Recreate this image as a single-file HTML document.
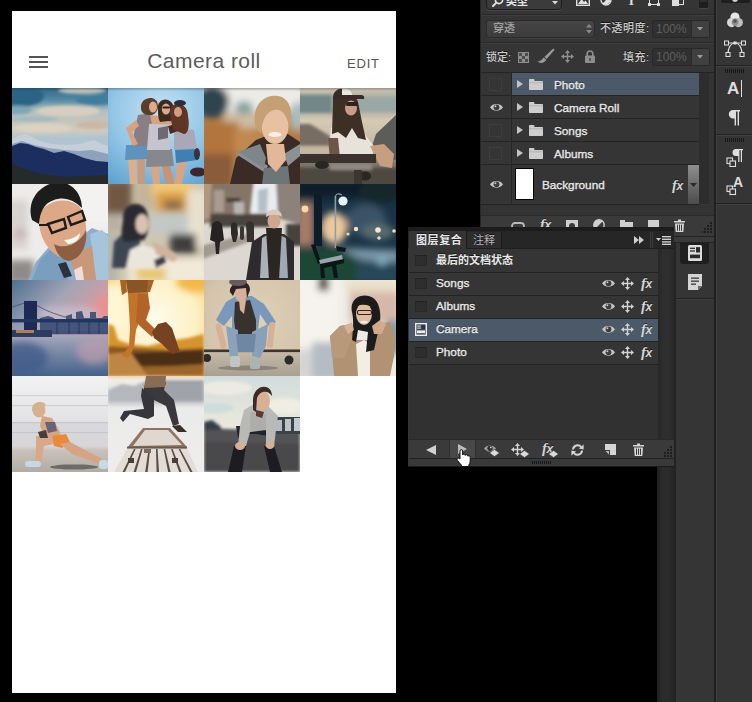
<!DOCTYPE html>
<html><head><meta charset="utf-8">
<style>
html,body{margin:0;padding:0;background:#000;}
body{width:752px;height:702px;position:relative;overflow:hidden;font-family:"Liberation Sans","Noto Sans CJK SC",sans-serif;}
.abs{position:absolute;}
#phone{position:absolute;left:12px;top:11px;width:384px;height:682px;background:#fff;}
#title{position:absolute;left:0;width:384px;top:38px;text-align:center;font-size:21px;color:#5c5c5c;letter-spacing:0.45px;}
#edit{position:absolute;left:335px;top:45px;font-size:13px;color:#555;letter-spacing:0.8px;}
.hb{position:absolute;left:17px;width:19px;height:2px;background:#555;}
.ph{position:absolute;width:96px;height:96px;overflow:hidden;}
.ph svg{display:block;}
/* PS panels */
.t{position:absolute;color:#e8e8e8;font-size:11.75px;font-weight:normal;-webkit-text-stroke:0.35px #e8e8e8;white-space:nowrap;text-shadow:0 -1px 0 rgba(0,0,0,.6);line-height:14px;}
.cj{font-family:"Liberation Sans","Noto Sans CJK SC",sans-serif;font-size:11px;-webkit-text-stroke:0;}
.fx{color:#d4d4d4;font:italic bold 12px "Liberation Sans",sans-serif;line-height:16px;white-space:nowrap;text-shadow:0 -1px 0 rgba(0,0,0,.5)}
.fx b{font:italic bold 15px "Liberation Serif",serif;margin-right:-0.5px}
.grip{background:repeating-linear-gradient(90deg,#161616 0,#161616 1px,transparent 1px,transparent 2px)}
.cb{position:absolute;width:10px;height:9px;border:1px solid #282828;border-top-color:#222;background:#2e2e2e}
.row{position:absolute;left:481px;width:218px;height:22px;background:#353535;border-bottom:1px solid #232323;}
.crow{position:absolute;left:409px;width:249px;height:22px;background:#353535;border-bottom:1px solid #232323;}
</style></head><body>

<!-- PHONE -->
<div id="phone">
  <div class="hb" style="top:45px"></div><div class="hb" style="top:50px"></div><div class="hb" style="top:55px"></div>
  <div id="title">Camera roll</div>
  <div id="edit">EDIT</div>
  
  <svg width="0" height="0" style="position:absolute"><defs>
<filter id="b1" filterUnits="userSpaceOnUse" x="0" y="0" width="96" height="96"><feGaussianBlur stdDeviation="0.7" edgeMode="duplicate"/></filter>
<filter id="b2" filterUnits="userSpaceOnUse" x="0" y="0" width="96" height="96"><feGaussianBlur stdDeviation="1.8" edgeMode="duplicate"/></filter>
<filter id="b4" filterUnits="userSpaceOnUse" x="0" y="0" width="96" height="96"><feGaussianBlur stdDeviation="3.5" edgeMode="duplicate"/></filter>
<filter id="b7" filterUnits="userSpaceOnUse" x="0" y="0" width="96" height="96"><feGaussianBlur stdDeviation="7" edgeMode="duplicate"/></filter>
</defs></svg>

<!-- 1 mountains -->
<div class="ph" style="left:0;top:77px"><svg width="96" height="96" viewBox="0 0 96 96">
<defs><linearGradient id="p1s" x1="0" y1="0" x2="0" y2="1"><stop offset="0" stop-color="#2f6688"/><stop offset=".12" stop-color="#5288a4"/><stop offset=".24" stop-color="#b4c0be"/><stop offset=".44" stop-color="#d2cabc"/><stop offset=".52" stop-color="#b0c4d0"/><stop offset="1" stop-color="#b4c2c8"/></linearGradient></defs>
<rect width="96" height="96" fill="url(#p1s)"/>
<g filter="url(#b2)">
<ellipse cx="6" cy="8" rx="26" ry="11" fill="#2c6384"/>
<ellipse cx="70" cy="2.5" rx="24" ry="3.5" fill="#b9c0bc"/>
<ellipse cx="84" cy="12" rx="20" ry="5" fill="#3f7d9c"/>
<ellipse cx="6" cy="22" rx="14" ry="4.5" fill="#7fa6b6"/>
<ellipse cx="22" cy="31" rx="24" ry="2.4" fill="#a0b8c0"/>
<ellipse cx="56" cy="23" rx="32" ry="5.5" fill="#d6cfc1"/>
<ellipse cx="82" cy="37" rx="18" ry="4" fill="#cbb7a4"/>
<ellipse cx="30" cy="40" rx="30" ry="4.5" fill="#dcd2c2"/>
</g>
<g filter="url(#b1)">
<polygon points="0,51 6,48 14,46 20,49 28,53 40,56 55,57 68,56 78,53 82,52 90,56 96,58 96,78 0,78" fill="#c4cfda"/>
<polygon points="0,56 10,53 22,57 36,60 52,62 66,63 80,62 96,66 96,80 0,80" fill="#8fa2bc"/>
<polygon points="0,58 8,55 16,56 24,59 32,61 42,65 52,63 62,66 72,70 84,73 96,74 96,96 0,96" fill="#1b2e5e"/>
<polygon points="0,76 12,81 30,86 55,89 96,87 96,96 0,96" fill="#27292c"/>
</g>
</svg></div>

<!-- 2 three girls -->
<div class="ph" style="left:96px;top:77px"><svg width="96" height="96" viewBox="0 0 96 96">
<defs><radialGradient id="p2s" cx=".55" cy=".25" r=".9"><stop offset="0" stop-color="#c4e2f4"/><stop offset=".55" stop-color="#94c6e6"/><stop offset="1" stop-color="#5ea2d0"/></radialGradient></defs>
<rect width="96" height="96" fill="url(#p2s)"/>
<g filter="url(#b1)">
<!-- legs -->
<polygon points="20,70 28,70 30,96 22,96" fill="#dcae90"/><polygon points="29,70 37,70 37,96 31,96" fill="#c99a7c"/>
<polygon points="42,76 51,76 52,96 45,96" fill="#d8a585"/><polygon points="53,76 62,76 66,96 58,96" fill="#c99474"/>
<polygon points="70,72 79,72 74,96 66,96" fill="#d7a484"/>
<!-- shorts -->
<polygon points="18,57 40,57 39,71 17,72" fill="#5f92bd"/>
<polygon points="39,61 64,61 66,78 38,79" fill="#85888d"/>
<polygon points="67,61 88,60 90,72 68,75" fill="#3f7fb4"/>
<!-- tops -->
<polygon points="30,27 44,25 46,58 24,58 27,40" fill="#8a7e86"/>
<polygon points="41,36 60,34 62,62 39,62" fill="#c6c4cc"/>
<polygon points="50,40 60,38 60,50 50,52" fill="#6e6a72"/>
<polygon points="66,40 86,42 89,61 66,62" fill="#aaa8b8"/>
<!-- arms -->
<polygon points="18,40 28,32 31,38 24,44 30,56 25,58" fill="#d6a282"/>
<polygon points="42,27 74,31 74,37 44,36" fill="#d6a282"/>
<polygon points="60,38 76,34 78,40 62,46" fill="#4a2c24"/>
<!-- heads -->
<path d="M33,20 C32,8 50,6 50,18 C50,24 46,28 40,27 C36,27 33,24 33,20 Z" fill="#5b3e2c"/><ellipse cx="45" cy="19" rx="4" ry="5.5" fill="#dbab8c"/>
<path d="M50,22 C48,8 66,8 66,22 C67,30 64,34 60,33 L52,34 C50,30 50,26 50,22 Z" fill="#3b2a22"/><ellipse cx="58" cy="21" rx="4.2" ry="5.5" fill="#d9a98a"/><rect x="54.5" y="18.5" width="7.5" height="2" rx="1" fill="#2a2020"/>
<path d="M62,26 C60,12 80,12 80,28 C82,38 80,46 76,46 L66,42 C63,36 63,30 62,26 Z" fill="#5e3426"/><ellipse cx="70" cy="24" rx="4" ry="5" fill="#d39c80"/>
<ellipse cx="72" cy="15" rx="6" ry="3" fill="#2b2f3a"/>
<!-- skates -->
<ellipse cx="90" cy="84" rx="8" ry="4.5" fill="#3a2630"/><ellipse cx="89" cy="66" rx="3" ry="6" fill="#3a3038"/>
</g>
</svg></div>

<!-- 3 blonde smiling -->
<div class="ph" style="left:192px;top:77px"><svg width="96" height="96" viewBox="0 0 96 96">
<rect width="96" height="96" fill="#b88652"/>
<g filter="url(#b4)">
<rect x="-5" y="-5" width="106" height="30" fill="#ecece6"/>
<ellipse cx="8" cy="14" rx="17" ry="17" fill="#2f444e"/>
<ellipse cx="40" cy="20" rx="9" ry="7" fill="#86a2a2"/>
<ellipse cx="94" cy="28" rx="9" ry="14" fill="#a9bcc0"/>
<rect x="20" y="26" width="36" height="14" fill="#cdbca2"/>
<rect x="-5" y="34" width="40" height="34" fill="#b2753a"/>
<rect x="30" y="40" width="22" height="24" fill="#c08a50"/>
<rect x="84" y="44" width="16" height="20" fill="#b07a44"/>
<rect x="-5" y="66" width="34" height="34" fill="#8a5c3a"/>
</g>
<g filter="url(#b1)">
<polygon points="26,96 30,72 46,56 60,48 86,48 96,56 96,96" fill="#33262200"/>
<polygon points="26,96 32,70 52,52 62,48 84,46 96,54 96,96" fill="#3a2b26"/>
<polygon points="32,66 40,62 64,78 60,84" fill="#8a9296"/>
<polygon points="34,64 56,56 62,70 60,80" fill="#7d868a"/>
<polygon points="80,66 96,56 96,68 84,78" fill="#8a9296"/>
<polygon points="60,80 84,78 86,96 58,96" fill="#6d7478"/>
<polygon points="62,56 80,56 82,72 72,84 64,76" fill="#e2b898"/>
<ellipse cx="71" cy="38" rx="13.5" ry="18" fill="#e8c0a2"/>
<path d="M52,40 C46,18 60,6 74,8 C86,10 90,24 86,40 C82,26 78,20 70,22 C62,24 58,32 57,46 Z" fill="#c6a074"/>
<ellipse cx="71" cy="46.5" rx="6.5" ry="2.4" fill="#f6f0ea"/>
</g>
</svg></div>

<!-- 4 cap girl skateboard -->
<div class="ph" style="left:288px;top:77px"><svg width="96" height="96" viewBox="0 0 96 96">
<defs><linearGradient id="p4s" x1="0" y1="0" x2="0" y2="1"><stop offset="0" stop-color="#d4c8b4"/><stop offset=".1" stop-color="#a8aca4"/><stop offset=".24" stop-color="#b4b2a6"/><stop offset=".34" stop-color="#d6cab4"/><stop offset=".6" stop-color="#c4b8a2"/><stop offset=".72" stop-color="#8c867a"/><stop offset="1" stop-color="#4c463e"/></linearGradient></defs>
<rect width="96" height="96" fill="url(#p4s)"/>
<g filter="url(#b2)">
<rect x="-4" y="7" width="36" height="18" fill="#728888"/>
<rect x="58" y="10" width="42" height="14" fill="#9aa8a6"/>
<polygon points="-4,36 10,36 30,48 30,62 -4,58" fill="#776d64"/>
<rect x="-4" y="58" width="40" height="9" fill="#c4b8a2"/>
<rect x="-4" y="80" width="104" height="20" fill="#4e4840"/>
<rect x="30" y="76" width="42" height="6" fill="#8e8a82"/>
</g>
<g filter="url(#b1)">
<polygon points="76,46 96,27 96,72 80,70 72,58" fill="#5c5b58"/>
<polygon points="31,40 42,33 58,38 74,58 72,72 36,72 29,62" fill="#e8e3da"/>
<polygon points="28,50 38,50 40,70 30,72" fill="#6e5546"/>
<polygon points="70,58 84,56 94,66 92,80 80,78" fill="#c69e80"/>
<path d="M33,12 C33,6 58,6 58,14 L62,34 L66,52 L58,50 L52,40 L46,50 L38,44 L32,46 Z" fill="#3e2e28"/>
<ellipse cx="51" cy="20" rx="6" ry="7.5" fill="#c99c84"/>
<rect x="46" y="14" width="12" height="4" rx="1.5" fill="#2e2424"/>
<path d="M34,10 C34,-1 50,-2 52,6 L52,10 Z" fill="#ece8e0"/>
<path d="M33,12 C32,4 38,0 42,1 L42,10 Z" fill="#3a2c2a"/>
<path d="M40,7 L62,7 Q65,8 64,11 L40,11 Z" fill="#3a2c2a"/>
<rect x="0" y="66" width="76" height="9" fill="#3b332d"/>
<ellipse cx="22" cy="77" rx="7" ry="4" fill="#2a2522"/><ellipse cx="65" cy="88" rx="6" ry="4.5" fill="#2a2522"/>
<rect x="54" y="82" width="8" height="14" fill="#3a3630"/>
</g>
</svg></div>
<!-- 5 man glasses -->
<div class="ph" style="left:0;top:173px"><svg width="96" height="96" viewBox="0 0 96 96">
<rect width="96" height="96" fill="#eeecea"/>
<g filter="url(#b4)">
<rect x="-4" y="16" width="20" height="50" fill="#d8d3cf"/>
<ellipse cx="8" cy="50" rx="6" ry="5" fill="#c4b0b4"/>
<rect x="62" y="-4" width="40" height="46" fill="#f4f2f0"/>
<rect x="-4" y="76" width="26" height="24" fill="#8e8a86"/>
</g>
<g filter="url(#b1)">
<polygon points="16,96 24,78 36,64 60,60 80,44 96,50 96,96" fill="#8aaecc"/>
<polygon points="20,96 28,76 40,64 52,70 56,96" fill="#7a9ebe"/>
<polygon points="78,50 90,46 96,52 96,96 84,96" fill="#a6c4dc"/>
<polygon points="58,72 80,62 84,96 64,96" fill="#c89878"/>
<polygon points="62,86 70,82 72,96 64,96" fill="#f0dcd8"/>
<polygon points="46,80 54,78 60,92 52,94" fill="#2c3040"/>
<path d="M28,30 C24,50 36,72 56,76 C72,74 78,56 72,30 C66,12 36,12 28,30 Z" fill="#dca888"/>
<path d="M42,60 C52,66 68,60 74,46 C76,62 68,76 56,77 C48,75 44,68 42,60 Z" fill="#8c5e44"/>
<path d="M20,36 C14,16 28,0 46,-2 C60,-2 70,10 70,24 C62,16 52,12 42,16 C32,19 28,28 27,40 Z" fill="#1e1c1c"/>
<path d="M52,56 C58,56 64,53 68,49 C68,56 62,60 56,60 Z" fill="#f8f4f0"/>
<path d="M36,40 L52,35 L54,44 L40,49 Z M56,33 L70,27 L73,36 L59,41 Z" fill="#dca88866" stroke="#1e1a1a" stroke-width="2.4"/>
<path d="M36,41 L27,41" stroke="#1e1a1a" stroke-width="2"/>
</g>
</svg></div>

<!-- 6 cafe woman -->
<div class="ph" style="left:96px;top:173px"><svg width="96" height="96" viewBox="0 0 96 96">
<rect width="96" height="96" fill="#cfc6b0"/>
<g filter="url(#b4)">
<rect x="-4" y="-4" width="28" height="34" fill="#705844"/>
<rect x="-4" y="30" width="18" height="18" fill="#b8b0a0"/>
<rect x="28" y="-4" width="18" height="30" fill="#c4b49a"/>
<rect x="44" y="-4" width="40" height="18" fill="#f2c878"/>
<rect x="48" y="8" width="30" height="20" fill="#dca048"/>
<rect x="56" y="16" width="18" height="10" fill="#8a6a48"/>
<rect x="80" y="6" width="20" height="56" fill="#e8e0ce"/>
<rect x="42" y="30" width="38" height="20" fill="#c2c8c6"/>
<rect x="62" y="50" width="26" height="20" fill="#3e3c3c"/>
<rect x="-4" y="50" width="14" height="50" fill="#b4b6ae"/>
<rect x="20" y="74" width="80" height="26" fill="#f2ead8"/>
<rect x="28" y="84" width="30" height="12" fill="#e6c468"/>
</g>
<g filter="url(#b2)">
<polygon points="4,84 6,58 16,48 30,50 34,66 24,84" fill="#3c4652"/>
<path d="M15,36 C13,16 38,14 40,32 C42,42 40,50 36,56 L16,58 C12,50 14,44 15,36 Z" fill="#2a2a30"/>
<ellipse cx="34" cy="40" rx="6.5" ry="10" fill="#d8c2b2"/>
<polygon points="18,84 22,66 34,60 50,66 52,84" fill="#ebe6dc"/>
<polygon points="44,58 56,62 70,72 66,78 48,70" fill="#d2b49c"/>
<polygon points="46,76 56,72 58,78 48,84" fill="#3a4048"/>
</g>
</svg></div>

<!-- 7 street -->
<div class="ph" style="left:192px;top:173px"><svg width="96" height="96" viewBox="0 0 96 96">
<rect width="96" height="96" fill="#dcd7d0"/>
<g filter="url(#b2)">
<rect x="46" y="-4" width="30" height="32" fill="#e9edf1"/>
<polygon points="-4,-4 50,-4 46,32 -4,40" fill="#857567"/>
<polygon points="-4,-4 8,-4 6,34 -4,38" fill="#b09880"/>
<rect x="10" y="6" width="10" height="22" fill="#a89c90"/>
<rect x="22" y="14" width="14" height="4" fill="#3e342e"/>
<rect x="30" y="18" width="10" height="12" fill="#b8b4b0"/>
<polygon points="72,-4 100,-4 100,42 74,34" fill="#8c827a"/>
<polygon points="54,6 64,4 63,28 54,28" fill="#b4c0c8"/>
<rect x="6" y="30" width="60" height="13" fill="#4a443e"/>
<polygon points="-4,62 44,50 50,56 -4,76" fill="#a09a92"/>
<rect x="82" y="40" width="16" height="22" fill="#46423e"/>
</g>
<g filter="url(#b1)">
<path d="M8,40 Q13,34 18,40 L20,56 L16,58 L15,70 L12,70 L11,58 L6,56 Z" fill="#262322"/>
<path d="M27,40 Q30,36 33,40 L34,50 L32,58 L29,58 L27,50 Z" fill="#2d2a28"/>
<rect x="36" y="42" width="4" height="14" rx="2" fill="#3a3632"/>
<path d="M42,40 Q46,34 50,40 L50,58 L43,58 Z" fill="#36322e"/>
<polygon points="42,96 48,58 60,50 80,50 90,58 90,96" fill="#2d2b2e"/>
<polygon points="58,54 65,50 66,94 56,94" fill="#a9b1b9"/><polygon points="74,50 82,54 84,94 74,94" fill="#a0a8b0"/>
<polygon points="62,44 78,44 75,96 65,96" fill="#2c2624"/>
<ellipse cx="70" cy="37" rx="6.5" ry="7.5" fill="#cfa68e"/>
<path d="M62,33 C62,23 78,23 78,33 C74,30 66,30 62,33 Z" fill="#d8ccc0"/>
</g>
</svg></div>

<!-- 8 night park -->
<div class="ph" style="left:288px;top:173px"><svg width="96" height="96" viewBox="0 0 96 96">
<rect width="96" height="96" fill="#1a3446"/>
<g filter="url(#b4)">
<rect x="-4" y="-4" width="104" height="18" fill="#0b1a2c"/>
<ellipse cx="80" cy="8" rx="22" ry="12" fill="#12262c"/>
<rect x="-4" y="18" width="18" height="44" fill="#a87c68"/>
<ellipse cx="34" cy="44" rx="13" ry="16" fill="#ecc89c"/>
<ellipse cx="66" cy="36" rx="20" ry="16" fill="#3a5268"/>
<ellipse cx="78" cy="48" rx="16" ry="8" fill="#586c70"/>
<rect x="-4" y="64" width="60" height="36" fill="#1c4634"/>
<polygon points="40,64 100,66 100,80 60,76" fill="#7896a6"/>
<rect x="56" y="78" width="44" height="22" fill="#264656"/>
<ellipse cx="82" cy="77" rx="5" ry="4" fill="#8ab4c8"/>
</g>
<g filter="url(#b1)">
<rect x="14" y="10" width="8" height="52" fill="#0e1c26"/>
<rect x="34.6" y="12" width="1.6" height="52" fill="#88a0a8"/>
<path d="M35.4,13 Q36,8 42,11" fill="none" stroke="#88a0a8" stroke-width="1.2"/>
<circle cx="43" cy="17" r="4.6" fill="#e2f2f8"/>
<circle cx="5" cy="25" r="3.4" fill="#fad8a8"/>
<circle cx="56" cy="45" r="2.2" fill="#f4e0c0"/><circle cx="78" cy="46" r="2.8" fill="#f6e8cc"/><circle cx="79" cy="54" r="1.8" fill="#e6dcc0"/><circle cx="94" cy="47" r="1.8" fill="#e6dcc0"/><circle cx="48" cy="50" r="1.6" fill="#e0dcc8"/>
<polygon points="11,61 15,60 21,78 18,80" fill="#0b1216"/>
<polygon points="19,76 42,71 43,76 21,82" fill="#9aa4ac"/>
<polygon points="20,80 44,75 44,79 36,81 38,94 34,94 32,82 24,84 25,94 21,94" fill="#0b1216"/>
<polygon points="36,62 46,64 45,68 37,67" fill="#10181c"/>
</g>
</svg></div>

<!-- 9 bridge -->
<div class="ph" style="left:0;top:269px"><svg width="96" height="96" viewBox="0 0 96 96">
<defs><linearGradient id="p9s" x1="0" y1="0" x2="1" y2=".6"><stop offset="0" stop-color="#4f7092"/><stop offset=".5" stop-color="#a4a4b6"/><stop offset="1" stop-color="#e49a98"/></linearGradient>
<linearGradient id="p9w" x1="0" y1="0" x2="0" y2="1"><stop offset="0" stop-color="#a8a8bc"/><stop offset=".4" stop-color="#7c8aa8"/><stop offset="1" stop-color="#44628a"/></linearGradient></defs>
<rect width="96" height="57" fill="url(#p9s)"/>
<rect y="55" width="96" height="41" fill="url(#p9w)"/>
<g filter="url(#b4)"><ellipse cx="56" cy="34" rx="30" ry="8" fill="#c8bccc" opacity=".85"/><ellipse cx="96" cy="26" rx="14" ry="12" fill="#ec9090" opacity=".8"/><ellipse cx="82" cy="70" rx="18" ry="14" fill="#b89cae" opacity=".75"/><ellipse cx="10" cy="78" rx="26" ry="16" fill="#3c5a88" opacity=".75"/></g>
<g filter="url(#b1)">
<path d="M0,27 Q10,24 18,21 Q44,40 96,44" fill="none" stroke="#4a5a78" stroke-width=".9"/>
<polygon points="28,54 28,38 36,36 42,38 44,42 54,42 54,36 60,34 60,40 64,40 64,32 70,31 72,38 78,38 78,32 84,32 84,38 90,38 92,36 96,36 96,54" fill="#44557c"/>
<rect x="12" y="21" width="13" height="32" fill="#1c2c54"/>
<rect x="0" y="39" width="96" height="3.4" fill="#22345c"/>
<rect x="0" y="50" width="40" height="7" fill="#2c3c60"/>
<rect x="40" y="51" width="56" height="4" fill="#34487040"/>
<rect x="4" y="50" width="18" height="3" fill="#b87c50"/>
<g fill="#26386090"><rect x="44" y="42" width="2" height="12"/><rect x="56" y="42" width="2" height="12"/><rect x="66" y="42" width="2" height="12"/><rect x="76" y="42" width="2" height="12"/><rect x="86" y="42" width="2" height="12"/></g>
</g>
</svg></div>

<!-- 10 runner sunset -->
<div class="ph" style="left:96px;top:269px"><svg width="96" height="96" viewBox="0 0 96 96">
<defs><radialGradient id="p10s" cx=".5" cy=".4" r=".85"><stop offset="0" stop-color="#fffbec"/><stop offset=".5" stop-color="#fdf0c4"/><stop offset=".8" stop-color="#f6cf74"/><stop offset="1" stop-color="#eeb040"/></radialGradient></defs>
<rect width="96" height="96" fill="url(#p10s)"/>
<g filter="url(#b4)"><ellipse cx="90" cy="2" rx="22" ry="10" fill="#f2b848"/><ellipse cx="6" cy="30" rx="12" ry="26" fill="#fff6d4"/></g>
<g filter="url(#b2)">
<polygon points="0,44 6,46 10,60 22,64 40,66 60,61 80,58 96,54 96,96 0,96" fill="#d6942e"/>
<polygon points="0,66 30,68 60,70 96,68 96,96 0,96" fill="#8a5622"/>
<polygon points="24,73 96,70 96,86 30,86" fill="#4c2e14"/>
<polygon points="0,74 22,72 40,96 0,96" fill="#be8644"/>
<polygon points="36,88 96,84 96,96 40,96" fill="#9c662c"/>
</g>
<g filter="url(#b1)">
<path d="M18,0 L42,0 L40,14 L38,28 L32,40 L28,50 L26,68 L20,78 L14,76 L21,66 L22,48 L21,30 L20,14 Z" fill="#c2742c"/>
<path d="M30,14 L40,14 L42,28 L38,40 L48,50 L44,57 L34,48 L28,42 Z" fill="#b2642a"/>
<path d="M18,0 L42,0 L41,12 L20,13 Z" fill="#8a5428"/>
<path d="M44,52 L50,44 L58,42 L64,48 L68,60 L72,72 L64,74 L54,64 L46,58 Z" fill="#764220"/>
<path d="M12,0 L18,0 L19,12 L14,15 Z M40,0 L46,0 L42,12 L39,12 Z" fill="#a86428"/>
</g>
</svg></div>

<!-- 11 guy sitting on skateboard -->
<div class="ph" style="left:192px;top:269px"><svg width="96" height="96" viewBox="0 0 96 96">
<defs><radialGradient id="p11s" cx=".55" cy=".4" r=".8"><stop offset="0" stop-color="#dfd0b8"/><stop offset=".7" stop-color="#d4c4ac"/><stop offset="1" stop-color="#c2b29a"/></radialGradient>
<linearGradient id="p11f" x1="0" y1="0" x2="0" y2="1"><stop offset="0" stop-color="#c6baa8"/><stop offset="1" stop-color="#a8a092"/></linearGradient></defs>
<rect width="96" height="96" fill="url(#p11s)"/>
<rect y="71" width="96" height="25" fill="url(#p11f)"/>
<g filter="url(#b1)">
<rect x="0" y="69.5" width="96" height="2.6" fill="#3a352f"/>
<circle cx="3" cy="78" r="4" fill="#2e2a28"/><circle cx="85" cy="80" r="4.5" fill="#2e2a28"/>
<ellipse cx="44" cy="88" rx="30" ry="2.5" fill="#8a8478"/>
<polygon points="12,40 22,22 32,16 48,16 60,24 72,42 64,46 56,34 54,50 28,52 28,36 20,46" fill="#7a99ba"/>
<polygon points="31,22 46,20 52,40 52,56 32,56 30,40" fill="#38322f"/>
<polygon points="35,20 42,20 40,34 36,30" fill="#d6b098"/>
<polygon points="22,46 34,50 34,76 26,78 24,62" fill="#8ca2ba"/>
<polygon points="48,52 64,44 62,66 56,78 48,76" fill="#8aa0b8"/>
<polygon points="32,54 52,54 50,72 34,72" fill="#6f87a3"/>
<ellipse cx="37" cy="14" rx="6" ry="8" fill="#d6b098"/>
<path d="M26,12 C24,2 46,-4 46,10 L43,18 L42,8 L32,9 L29,16 Z" fill="#2e2422"/>
<ellipse cx="34" cy="2" rx="9" ry="4" fill="#6a5a60"/>
<rect x="26" y="76" width="10" height="11" rx="2" fill="#c0c4c4"/><rect x="46" y="78" width="10" height="11" rx="2" fill="#aab4b8"/>
<rect x="14" y="43" width="6" height="26" rx="3" transform="rotate(-14 17 56)" fill="#d6b098"/>
<rect x="64" y="42" width="6" height="26" rx="3" transform="rotate(6 67 55)" fill="#d6b098"/>
</g>
</svg></div>

<!-- 12 headphones woman -->
<div class="ph" style="left:288px;top:269px"><svg width="96" height="96" viewBox="0 0 96 96">
<rect width="96" height="96" fill="#eeebe6"/>
<g filter="url(#b4)">
<rect x="-4" y="-4" width="44" height="70" fill="#f6f3ee"/>
<rect x="18" y="-4" width="11" height="15" fill="#4e4e4a"/>
<rect x="46" y="0" width="54" height="12" fill="#eadfc8"/>
<rect x="50" y="12" width="50" height="30" fill="#d6b8aa"/>
<rect x="86" y="40" width="14" height="34" fill="#8a98a0"/>
<rect x="12" y="62" width="30" height="38" fill="#b4bcc4"/>
<rect x="-4" y="70" width="16" height="30" fill="#d4d4d4"/>
</g>
<g filter="url(#b1)">
<polygon points="34,96 32,72 30,56 40,46 52,44 56,60 70,60 76,44 90,42 96,58 94,76 90,96" fill="#b19272"/>
<polygon points="30,56 40,46 50,44 52,60 44,78 32,78" fill="#b89a7a"/>
<polygon points="56,64 64,60 70,64 70,96 58,96" fill="#f2eee6"/>
<path d="M52,32 C48,14 72,10 78,24 C82,34 80,44 78,52 L74,70 L66,72 L68,52 L58,50 L56,62 L52,60 C53,50 54,40 52,32 Z" fill="#1e1a1c"/>
<ellipse cx="64" cy="34" rx="8" ry="11" fill="#e0bca2"/>
<path d="M56,26 C58,18 72,18 76,30 C70,24 62,24 56,26 Z" fill="#1e1a1c"/>
<rect x="57.5" y="30.5" width="14" height="4" rx="1.5" fill="none" stroke="#3a2018" stroke-width="1.1"/>
<ellipse cx="64" cy="42" rx="3.6" ry="1.3" fill="#f6f0ec"/>
<polygon points="72,46 80,40 86,44 82,54 74,54" fill="#d2aa8c"/>
<polygon points="44,46 52,42 54,50 48,54" fill="#d8b296"/>
</g>
</svg></div>
<!-- 13 stretching woman -->
<div class="ph" style="left:0;top:365px"><svg width="96" height="96" viewBox="0 0 96 96">
<defs><linearGradient id="p13s" x1="0" y1="0" x2="0" y2="1"><stop offset="0" stop-color="#f2f2f3"/><stop offset=".3" stop-color="#e8e8ea"/><stop offset=".48" stop-color="#e2e2e5"/><stop offset=".5" stop-color="#d9d9dd"/><stop offset=".73" stop-color="#d6d5d8"/><stop offset=".77" stop-color="#c9c2ba"/><stop offset="1" stop-color="#b2aca6"/></linearGradient></defs>
<rect width="96" height="96" fill="url(#p13s)"/>
<g filter="url(#b1)">
<rect x="0" y="19" width="96" height="1.2" fill="#d4d4d8"/><rect x="0" y="29" width="96" height="1.2" fill="#d0d0d4"/><rect x="0" y="46" width="96" height="1.4" fill="#c8c8cc"/><rect x="0" y="56" width="96" height="1.2" fill="#c6c6ca"/>
<ellipse cx="27" cy="34" rx="6.5" ry="7.5" fill="#d8b090"/>
<path d="M20,34 C19,24 34,24 34,30 C29,28 25,30 22,38 Z" fill="#d2b48c"/>
<polygon points="30,40 40,42 46,52 50,62 42,68 32,60 28,50" fill="#d4a684"/>
<polygon points="33,46 43,46 45,55 36,57" fill="#6a6478"/>
<polygon points="40,60 54,58 58,66 50,72 42,70" fill="#ea8a38"/>
<polygon points="24,60 40,60 42,68 32,70 29,88 23,88 24,72" fill="#d8a888"/>
<polygon points="48,68 58,66 92,84 90,89 60,78" fill="#d6a484"/>
<polygon points="26,56 34,54 36,62 28,62" fill="#4a3c38"/>
<rect x="13" y="85" width="16" height="6" rx="3" fill="#c4d8e6"/><rect x="87" y="84" width="9" height="9" rx="3" fill="#c8dae6"/>
<ellipse cx="62" cy="91" rx="24" ry="2.6" fill="#6e6a6a"/>
</g>
</svg></div>

<!-- 14 jumper dock -->
<div class="ph" style="left:96px;top:365px"><svg width="96" height="96" viewBox="0 0 96 96">
<defs><linearGradient id="p14s" x1="0" y1="0" x2="0" y2="1"><stop offset="0" stop-color="#f2d2b0"/><stop offset=".04" stop-color="#f0ede6"/><stop offset=".28" stop-color="#dcdee0"/><stop offset=".31" stop-color="#ebebeb"/><stop offset="1" stop-color="#eeedeb"/></linearGradient></defs>
<rect width="96" height="96" fill="url(#p14s)"/>
<g filter="url(#b2)">
<polygon points="0,14 14,8 26,10 40,4 52,8 70,4 96,6 96,28 0,28" fill="#b4b8bc"/>
<polygon points="36,8 50,4 70,4 96,4 96,28 40,28" fill="#a0a4aa"/>
<rect x="0" y="26" width="96" height="4" fill="#d4d6d8"/>
</g>
<g filter="url(#b1)">
<polygon points="35,52 62,52 79,71 19,72" fill="#8c7664"/>
<polygon points="37,54 60,54 74,69 25,70" fill="#e0d8d0"/>
<polygon points="19,73 79,72 90,96 6,96" fill="#e2ddd6"/>
<g fill="#5c4c42"><polygon points="26,73 27.6,73 17,96 14.6,96"/><polygon points="33,73 34.6,73 28,96 25.6,96"/><polygon points="40.6,73 42.2,73 39.6,96 37.2,96"/><polygon points="48,73 49.6,73 51,96 48.6,96"/><polygon points="55.6,73 57.2,73 62.6,96 60.2,96"/><polygon points="63,73 64.6,73 73.6,96 71.2,96"/><polygon points="70.6,73 72.2,73 84.6,96 82.2,96"/></g>
<rect x="19" y="70.6" width="60" height="2" fill="#6a5a4e"/>
<rect x="20" y="82" width="6" height="5" fill="#4a3c34"/><rect x="64" y="82" width="6" height="5" fill="#4a3c34"/><rect x="36" y="73" width="7" height="4" fill="#7a6a5e"/>
<path d="M36,10 L58,6 L56,14 L66,24 L71,48 L65,50 L58,30 L46,24 L36,18 Z" fill="#38383d"/>
<path d="M34,12 L46,22 L46,40 L40,43 L22,38 L15,46 L12,42 L16,35 L36,33 L33,20 Z" fill="#34343a"/>
<path d="M64,50 L72,49 L79,56 L70,56 Z" fill="#3a2e2a"/>
<polygon points="38,0 58,0 57,11 36,12" fill="#8a6c54"/>
</g>
</svg></div>

<!-- 15 woman road -->
<div class="ph" style="left:192px;top:365px"><svg width="96" height="96" viewBox="0 0 96 96">
<defs><linearGradient id="p15s" x1="0" y1="0" x2="0" y2="1"><stop offset="0" stop-color="#d0dcdc"/><stop offset=".3" stop-color="#dfe4dc"/><stop offset=".52" stop-color="#ebe8de"/></linearGradient></defs>
<rect width="96" height="96" fill="url(#p15s)"/>
<g filter="url(#b2)">
<ellipse cx="22" cy="12" rx="26" ry="7" fill="#ecebe2"/>
<ellipse cx="80" cy="30" rx="20" ry="8" fill="#f0ede2"/>
<ellipse cx="10" cy="32" rx="20" ry="5" fill="#cfdcda"/>
<polygon points="0,52 96,56 96,96 0,96" fill="#525256"/>
<polygon points="0,66 96,68 96,96 0,96" fill="#48484c"/>
<polygon points="0,46 8,44 16,50 18,54 0,54" fill="#363e48"/>
</g>
<g filter="url(#b1)">
<rect x="68" y="41" width="28" height="17" fill="#3a4048"/>
<rect x="72" y="44" width="6" height="11" fill="#b4bcc2"/><rect x="81" y="43" width="6" height="12" fill="#bcc4ca"/><rect x="90" y="42" width="6" height="13" fill="#c4ccd0"/>
<polygon points="32,50 60,50 64,60 52,58 44,58 34,62" fill="#24242a"/>
<polygon points="40,34 50,28 64,30 74,40 72,54 70,70 62,70 62,52 46,56 42,70 34,70 36,50" fill="#b9b9b7"/>
<polygon points="46,36 62,38 62,54 46,56" fill="#adadab"/>
<polygon points="30,70 42,70 38,96 24,96" fill="#1e1e22"/>
<polygon points="60,70 70,70 78,96 66,96" fill="#1e1e22"/>
<ellipse cx="36" cy="70" rx="5" ry="4" fill="#d8b094"/><ellipse cx="66" cy="69" rx="4.5" ry="4" fill="#d8b094"/>
<ellipse cx="59" cy="25" rx="7" ry="10" fill="#d8b094"/>
<path d="M49,26 C48,8 68,6 68,20 C64,14 56,14 53,22 L52,36 L49,34 Z" fill="#3e2c22"/>
<polygon points="52,34 60,36 58,42 52,40" fill="#5a3a2c"/>
</g>
</svg></div>

  <div class="abs" style="left:0;top:77px;width:384px;height:3px;background:linear-gradient(rgba(40,40,50,.35),rgba(40,40,50,0))"></div>
</div>

<!-- LAYERS PANEL -->
<div id="layers" class="abs" style="left:480px;top:0;width:235px;height:242px;background:#353535;"></div>
<svg width="0" height="0" style="position:absolute"><defs>
<g id="eye"><path d="M0,4.3 C2.6,-0.2 10.4,-0.2 13,4.3 C10.4,8.8 2.6,8.8 0,4.3 Z" fill="#c6c6c6"/><circle cx="6.5" cy="4.3" r="2.9" fill="#3c3c3c"/><circle cx="5.4" cy="3.2" r="1" fill="#c6c6c6"/></g>
<g id="fold"><path d="M0,3.2 L0,0.8 Q0,0 0.8,0 L4.6,0 Q5.4,0 5.4,0.8 L5.4,2 L13.2,2 Q14,2 14,2.8 L14,10.2 Q14,11 13.2,11 L0.8,11 Q0,11 0,10.2 Z" fill="#cdcdcd"/><rect x="0" y="3.4" width="14" height="0.9" fill="#b2b2b2"/></g>
<g id="tri"><polygon points="0,0 6,4 0,8" fill="#c4c4c4"/></g>
<g id="mv"><path d="M6.5,0 L9,3 L7.2,3 L7.2,5.8 L10,5.8 L10,4 L13,6.5 L10,9 L10,7.2 L7.2,7.2 L7.2,10 L9,10 L6.5,13 L4,10 L5.8,10 L5.8,7.2 L3,7.2 L3,9 L0,6.5 L3,4 L3,5.8 L5.8,5.8 L5.8,3 L4,3 Z" fill="#d2d2d2"/></g>
</defs></svg>

<div class="abs" style="left:480px;top:0;width:1px;height:242px;background:#262626"></div>
<div class="abs" style="left:714px;top:0;width:2px;height:702px;background:#202020"></div>

<!-- top filter row (cut off) -->
<div class="abs" style="left:486px;top:-12px;width:74px;height:20px;border:1px solid #1c1c1c;border-radius:4px;background:#3b3b3b;box-shadow:0 1px 0 #454545"></div>
<svg class="abs" style="left:492px;top:-4px" width="12" height="12" viewBox="0 0 12 12"><circle cx="7" cy="4" r="3.6" fill="none" stroke="#e4e4e4" stroke-width="1.6"/><path d="M4.4,6.6 L1,10" stroke="#e4e4e4" stroke-width="2" stroke-linecap="round"/></svg>
<div class="t cj" style="left:506px;top:-6.5px;color:#e6e6e6;font-weight:bold">类型</div>
<svg class="abs" style="left:552px;top:1px" width="6" height="4"><polygon points="0,0 6,0 3,3.5" fill="#d8d8d8"/></svg>
<!-- top icons -->
<svg class="abs" style="left:576px;top:-6px" width="14" height="12" viewBox="0 0 14 12"><rect x=".7" y=".7" width="12.6" height="10.6" fill="none" stroke="#e0e0e0" stroke-width="1.4"/><polygon points="2,10 5.5,5 8,8 9.5,6.5 12,10" fill="#e0e0e0"/></svg>
<svg class="abs" style="left:600px;top:-6px" width="12" height="12" viewBox="0 0 12 12"><circle cx="6" cy="6" r="5" fill="none" stroke="#e0e0e0" stroke-width="1.4"/><path d="M2.5,9.5 A5,5 0 0,0 9.5,2.5 Z" fill="#e0e0e0"/></svg>
<div class="abs" style="left:627px;top:-7px;color:#e0e0e0;font:bold 13px 'Liberation Serif',serif">T</div>
<svg class="abs" style="left:648px;top:-5px" width="12" height="11" viewBox="0 0 12 11"><rect x="1.5" y="1.5" width="9" height="8" fill="none" stroke="#dcdcdc" stroke-width="1"/><rect x="0" y="0" width="3" height="3" fill="#dcdcdc"/><rect x="9" y="0" width="3" height="3" fill="#dcdcdc"/><rect x="0" y="8" width="3" height="3" fill="#dcdcdc"/><rect x="9" y="8" width="3" height="3" fill="#dcdcdc"/></svg>
<svg class="abs" style="left:672px;top:-5px" width="12" height="12" viewBox="0 0 12 12"><rect x="3.5" y=".5" width="8" height="9" fill="none" stroke="#dcdcdc"/><rect x="0" y="4" width="7" height="7" fill="#dcdcdc"/></svg>
<div class="abs" style="left:699px;top:-4px;width:9px;height:12px;background:#1e1e1e;border-radius:1px;box-shadow:0 1px 0 #444"></div>
<div class="abs" style="left:700px;top:-3px;width:7px;height:5px;background:#2e2e2e"></div>

<div class="abs" style="left:481px;top:14px;width:233px;height:1px;background:#282828"></div>
<div class="abs" style="left:481px;top:15px;width:233px;height:1px;background:#3d3d3d"></div>

<!-- blend row -->
<div class="abs" style="left:486px;top:20px;width:107px;height:16px;border:1px solid #2a2a2a;border-radius:3px;background:linear-gradient(#454545,#3c3c3c);box-shadow:0 1px 0 #404040"></div>
<div class="t cj" style="left:493px;top:21px;color:#a4a4a4;font-weight:500;text-shadow:none">穿透</div>
<svg class="abs" style="left:586px;top:24px" width="6" height="10"><polygon points="3,0 6,3.5 0,3.5" fill="#8a8a8a"/><polygon points="0,6 6,6 3,9.5" fill="#8a8a8a"/></svg>
<div class="t cj" style="left:600px;top:21px;color:#cacaca;font-weight:500;letter-spacing:0.5px">不透明度:</div>
<div class="abs" style="left:652px;top:20px;width:56px;height:16px;border:1px solid #282828;border-radius:2px;background:#303030;"></div>
<div class="abs" style="left:691px;top:21px;width:17px;height:16px;background:#404040;border-left:1px solid #2a2a2a"></div>
<div class="abs" style="left:656px;top:21px;color:#5e5e5e;font-size:12px;line-height:16px">100%</div>
<svg class="abs" style="left:697px;top:27px" width="6" height="4"><polygon points="0,0 6,0 3,3.5" fill="#9a9a9a"/></svg>

<div class="abs" style="left:481px;top:42px;width:233px;height:1px;background:#2a2a2a"></div>
<div class="abs" style="left:481px;top:43px;width:233px;height:1px;background:#3d3d3d"></div>

<!-- lock row -->
<div class="t cj" style="left:486px;top:50px;color:#cacaca;font-weight:500">锁定:</div>
<svg class="abs" style="left:518px;top:52px" width="11" height="11" viewBox="0 0 11 11"><rect width="11" height="11" fill="#8c8c8c"/><g fill="#4c4c4c"><rect x="1" y="1" width="3" height="3"/><rect x="7" y="1" width="3" height="3"/><rect x="4" y="4" width="3" height="3"/><rect x="1" y="7" width="3" height="3"/><rect x="7" y="7" width="3" height="3"/></g></svg>
<svg class="abs" style="left:537px;top:48px" width="18" height="16" viewBox="0 0 18 16"><path d="M16.2,0.6 L17.6,1.8 L9.6,11 L7.4,9 Z" fill="#9a9a9a"/><path d="M6.6,9.4 L9.2,11.8 C8,15 3,16 0.4,13.6 C3,13.4 4.6,12 6.6,9.4 Z" fill="#9a9a9a"/></svg>
<svg class="abs" style="left:561px;top:50px" width="13" height="13" viewBox="0 0 13 13"><path d="M6.5,0 L9,3 L7.2,3 L7.2,5.8 L10,5.8 L10,4 L13,6.5 L10,9 L10,7.2 L7.2,7.2 L7.2,10 L9,10 L6.5,13 L4,10 L5.8,10 L5.8,7.2 L3,7.2 L3,9 L0,6.5 L3,4 L3,5.8 L5.8,5.8 L5.8,3 L4,3 Z" fill="#8e8e8e"/></svg>
<svg class="abs" style="left:585px;top:50px" width="10" height="13" viewBox="0 0 10 13"><path d="M2.2,6 L2.2,3.8 A2.8,2.8 0 0,1 7.8,3.8 L7.8,6" fill="none" stroke="#8e8e8e" stroke-width="1.6"/><rect x="0" y="5.6" width="10" height="7.4" rx="1" fill="#8e8e8e"/><rect x="4.3" y="8" width="1.4" height="3" fill="#444"/></svg>
<div class="t cj" style="left:623px;top:50px;color:#cacaca;font-weight:500;letter-spacing:0.5px">填充:</div>
<div class="abs" style="left:652px;top:48px;width:56px;height:16px;border:1px solid #282828;border-radius:2px;background:#303030;"></div>
<div class="abs" style="left:691px;top:49px;width:17px;height:16px;background:#404040;border-left:1px solid #2a2a2a"></div>
<div class="abs" style="left:656px;top:49px;color:#5e5e5e;font-size:12px;line-height:16px">100%</div>
<svg class="abs" style="left:697px;top:55px" width="6" height="4"><polygon points="0,0 6,0 3,3.5" fill="#9a9a9a"/></svg>

<!-- layer list -->
<div class="abs" style="left:481px;top:72px;width:233px;height:1px;background:#232323"></div>
<div class="abs" style="left:699px;top:73px;width:10px;height:131px;background:#2d2d2d"></div>
<div class="abs" style="left:709px;top:73px;width:5px;height:131px;background:#333"></div>

<div class="row" style="top:73px"><div class="abs" style="left:31px;top:0;width:187px;height:22px;background:#4b5968"></div></div>
<div class="row" style="top:96px"></div>
<div class="row" style="top:119px"></div>
<div class="row" style="top:142px"></div>
<div class="row" style="top:165px;height:39px"></div>
<div class="abs" style="left:511px;top:73px;width:1px;height:131px;background:#262626"></div>

<!-- vis boxes -->
<div class="abs" style="left:489px;top:78px;width:11px;height:11px;border:1px solid #3d3d3d"></div>
<div class="abs" style="left:489px;top:124px;width:11px;height:11px;border:1px solid #3d3d3d"></div>
<div class="abs" style="left:489px;top:147px;width:11px;height:11px;border:1px solid #3d3d3d"></div>
<svg class="abs" style="left:489.5px;top:102.5px" width="13" height="9"><use href="#eye"/></svg>
<svg class="abs" style="left:489.5px;top:180px" width="13" height="9"><use href="#eye"/></svg>

<svg class="abs" style="left:517px;top:80px" width="6" height="8"><use href="#tri"/></svg>
<svg class="abs" style="left:517px;top:103px" width="6" height="8"><use href="#tri"/></svg>
<svg class="abs" style="left:517px;top:126px" width="6" height="8"><use href="#tri"/></svg>
<svg class="abs" style="left:517px;top:149px" width="6" height="8"><use href="#tri"/></svg>
<svg class="abs" style="left:529px;top:79px" width="14" height="11"><use href="#fold"/></svg>
<svg class="abs" style="left:529px;top:102px" width="14" height="11"><use href="#fold"/></svg>
<svg class="abs" style="left:529px;top:125px" width="14" height="11"><use href="#fold"/></svg>
<svg class="abs" style="left:529px;top:148px" width="14" height="11"><use href="#fold"/></svg>
<div class="t" style="left:554px;top:78px">Photo</div>
<div class="t" style="left:554px;top:101px">Camera Roll</div>
<div class="t" style="left:554px;top:124px">Songs</div>
<div class="t" style="left:554px;top:147px">Albums</div>
<div class="abs" style="left:515px;top:168px;width:17px;height:30px;background:#fff;border:1px solid #000"></div>
<div class="t" style="left:542px;top:178px">Background</div>
<div class="abs fx" style="left:672px;top:177px"><b>f</b>x</div>
<div class="abs" style="left:688px;top:165px;width:11px;height:39px;background:linear-gradient(#8e8e8e,#4c4c4c)"></div>
<svg class="abs" style="left:690px;top:183px" width="7" height="4"><polygon points="0,0 7,0 3.5,4" fill="#2a2a2a"/></svg>

<!-- empty + toolbar -->
<div class="abs" style="left:481px;top:205px;width:233px;height:10px;background:#333"></div>
<div class="abs" style="left:481px;top:215px;width:233px;height:1px;background:#2a2a2a"></div>
<div class="abs" style="left:481px;top:216px;width:233px;height:20px;background:#3a3a3a"></div>
<div class="abs" style="left:481px;top:236px;width:233px;height:1px;background:#222"></div>
<div class="abs" style="left:481px;top:237px;width:233px;height:5px;background:#3a3a3a"></div>
<!-- toolbar icons -->
<svg class="abs" style="left:511px;top:222px" width="14" height="8" viewBox="0 0 14 8"><rect x="1" y="1" width="12" height="6" rx="3" fill="none" stroke="#b8b8b8" stroke-width="1.8"/></svg>
<div class="abs fx" style="left:540px;top:216px"><b>f</b>x</div>
<svg class="abs" style="left:566px;top:220px" width="12" height="10" viewBox="0 0 12 10"><rect width="12" height="10" fill="#cfcfcf"/><circle cx="6" cy="6" r="3" fill="#3a3a3a"/></svg>
<svg class="abs" style="left:593px;top:219px" width="12" height="12" viewBox="0 0 12 12"><circle cx="6" cy="6" r="5.2" fill="none" stroke="#cfcfcf" stroke-width="1.4"/><path d="M2.3,9.7 A5.2,5.2 0 0,1 9.7,2.3 Z" fill="#cfcfcf"/></svg>
<svg class="abs" style="left:620px;top:220px" width="13" height="10" viewBox="0 0 13 10"><path d="M0,0 L5,0 L5,2 L13,2 L13,10 L0,10 Z" fill="#cfcfcf"/></svg>
<svg class="abs" style="left:648px;top:220px" width="11" height="11" viewBox="0 0 11 11"><path d="M0,0 L11,0 L11,11 L5,11 L5,7 L0,7 Z" fill="#cfcfcf"/></svg>
<svg class="abs" style="left:674px;top:219px" width="11" height="13" viewBox="0 0 11 13"><use href="#trash"/></svg>
<svg class="abs" style="left:702px;top:222px" width="11" height="11" viewBox="0 0 11 11"><g fill="#1e1e1e"><rect x="8" y="0" width="2" height="2"/><rect x="5" y="3" width="2" height="2"/><rect x="8" y="3" width="2" height="2"/><rect x="2" y="6" width="2" height="2"/><rect x="5" y="6" width="2" height="2"/><rect x="8" y="6" width="2" height="2"/><rect x="-1" y="9" width="2" height="2"/><rect x="2" y="9" width="2" height="2"/><rect x="5" y="9" width="2" height="2"/><rect x="8" y="9" width="2" height="2"/></g></svg>
<svg width="0" height="0" style="position:absolute"><defs><g id="trash"><path d="M4,0.6 L7,0.6 L7,2 L10.6,2 Q11,2 11,2.6 L11,3.6 L0,3.6 L0,2.6 Q0,2 0.4,2 L4,2 Z" fill="#d6d6d6"/><path d="M1,4.6 L10,4.6 L9.4,12.4 Q9.3,13 8.8,13 L2.2,13 Q1.7,13 1.6,12.4 Z" fill="#d6d6d6"/><rect x="3" y="5.6" width="1" height="6.2" fill="#3a3a3a"/><rect x="5" y="5.6" width="1" height="6.2" fill="#3a3a3a"/><rect x="7" y="5.6" width="1" height="6.2" fill="#3a3a3a"/></g></defs></svg>


<!-- RIGHT STRIP -->
<!-- far right icon strip x716..752 -->
<div class="abs" style="left:716px;top:0;width:36px;height:702px;background:#353535"></div>
<div class="abs" style="left:716px;top:0;width:1px;height:702px;background:#3e3e3e"></div>
<!-- top partial button -->
<div class="abs" style="left:721px;top:-6px;width:29px;height:9px;background:#1e1e1e;border-radius:2px"></div>
<div class="abs" style="left:732px;top:-1px;width:6px;height:3px;background:#cfcfcf;border-radius:0 0 3px 3px"></div>
<!-- channels icon -->
<svg class="abs" style="left:726px;top:11px" width="18" height="18" viewBox="0 0 18 18"><circle cx="9" cy="6" r="4.6" fill="#e6e6e6"/><circle cx="5.6" cy="11.6" r="4.6" fill="#d8d8d8"/><circle cx="12.4" cy="11.6" r="4.6" fill="#bdbdbd"/><path d="M9,7.2 A4.6,4.6 0 0,1 12.4,10.4 A4.6,4.6 0 0,1 9,15 A4.6,4.6 0 0,1 5.6,10.4 A4.6,4.6 0 0,1 9,7.2 Z" fill="#8a8a8a"/><circle cx="9" cy="10" r="1.8" fill="#555"/></svg>
<!-- paths icon -->
<svg class="abs" style="left:724px;top:40px" width="22" height="17" viewBox="0 0 22 17"><path d="M4,14 C4,6 8,3 11,3 C14,3 18,6 18,14" fill="none" stroke="#dcdcdc" stroke-width="1.2"/><path d="M2,3 L20,3" stroke="#dcdcdc" stroke-width="1"/><g fill="#353535" stroke="#e2e2e2" stroke-width="1"><rect x="0.5" y="1" width="4" height="4"/><rect x="17.5" y="1" width="4" height="4"/><rect x="2" y="12.5" width="4" height="4"/><rect x="16" y="12.5" width="4" height="4"/></g><rect x="9.5" y="1.5" width="3" height="3" fill="#e2e2e2"/></svg>
<div class="abs" style="left:716px;top:65px;width:36px;height:1px;background:#222"></div>
<div class="abs" style="left:716px;top:66px;width:36px;height:1px;background:#404040"></div>
<div class="abs grip" style="left:725px;top:69px;width:19px;height:4px"></div>
<!-- A| -->
<div class="abs" style="left:727px;top:79px;color:#dedede;font:bold 17px 'Liberation Sans',sans-serif;line-height:20px">A</div>
<div class="abs" style="left:740.5px;top:80px;width:1.2px;height:17px;background:#dedede"></div>
<!-- pilcrow -->
<svg class="abs" style="left:728px;top:110px" width="13" height="16" viewBox="0 0 13 16"><path d="M5,0 L12,0 L12,1.4 L11,1.4 L11,15.5 L9.6,15.5 L9.6,1.4 L8,1.4 L8,15.5 L6.6,15.5 L6.6,8.4 L5,8.4 A4.2,4.2 0 0,1 5,0 Z" fill="#dedede"/></svg>
<div class="abs" style="left:716px;top:134px;width:36px;height:1px;background:#222"></div>
<div class="abs" style="left:716px;top:135px;width:36px;height:1px;background:#404040"></div>
<div class="abs grip" style="left:725px;top:138px;width:19px;height:4px"></div>
<!-- paragraph styles -->
<svg class="abs" style="left:726px;top:149px" width="18" height="18" viewBox="0 0 18 18"><path d="M10,0 L17,0 L17,1.2 L16,1.2 L16,13 L14.8,13 L14.8,1.2 L13.4,1.2 L13.4,13 L12.2,13 L12.2,7 L10,7 A3.5,3.5 0 0,1 10,0 Z" fill="#dedede"/><rect x="1" y="9" width="5.5" height="5.5" fill="#353535" stroke="#dedede" stroke-width="1.1"/><rect x="4" y="12" width="5.5" height="5.5" fill="#353535" stroke="#dedede" stroke-width="1.1"/></svg>
<!-- character styles -->
<div class="abs" style="left:733px;top:174px;color:#dedede;font:bold 14px 'Liberation Sans',sans-serif;line-height:16px">A</div>
<svg class="abs" style="left:726px;top:185px" width="11" height="11" viewBox="0 0 11 11"><rect x="1" y="1" width="5.5" height="5.5" fill="#353535" stroke="#dedede" stroke-width="1.1"/><rect x="4" y="4" width="5.5" height="5.5" fill="#353535" stroke="#dedede" stroke-width="1.1"/></svg>
<div class="abs" style="left:716px;top:203px;width:36px;height:1px;background:#222"></div>
<div class="abs" style="left:716px;top:204px;width:36px;height:1px;background:#404040"></div>

<!-- narrow column x676..713 -->
<div class="abs" style="left:674px;top:242px;width:40px;height:460px;background:#353535"></div>
<div class="abs" style="left:674px;top:242px;width:2px;height:460px;background:#232323"></div>
<div class="abs" style="left:676px;top:242px;width:38px;height:1px;background:#232323"></div>
<div class="abs" style="left:680px;top:243px;width:29px;height:21px;background:#1f1f1f;border-radius:0 0 3px 3px"></div>
<svg class="abs" style="left:688px;top:245px" width="14" height="16" viewBox="0 0 14 15" preserveAspectRatio="none"><rect width="14" height="15" rx="1.5" fill="#dcdcdc"/><rect x="2" y="2.5" width="5" height="1.2" fill="#2a2a2a"/><rect x="2" y="5" width="5" height="1.2" fill="#2a2a2a"/><rect x="8" y="2" width="4" height="5" fill="#2a2a2a"/><rect x="2" y="9" width="10" height="3.4" fill="#2a2a2a"/></svg>
<svg class="abs" style="left:688px;top:274px" width="14" height="16" viewBox="0 0 14 16"><path d="M0,0 L14,0 L14,12 L10,16 L0,16 Z" fill="#d4d4d4"/><polygon points="10,16 10,12 14,12" fill="#6a6a6a"/><rect x="3" y="3.5" width="8" height="1.3" fill="#3a3a3a"/><rect x="3" y="6.5" width="8" height="1.3" fill="#3a3a3a"/><rect x="3" y="9.5" width="5" height="1.3" fill="#3a3a3a"/></svg>
<div class="abs" style="left:676px;top:298px;width:38px;height:1px;background:#232323"></div>
<div class="abs" style="left:676px;top:299px;width:38px;height:1px;background:#3e3e3e"></div>


<!-- COMPS PANEL -->
<!-- doc scrollbar strip under comps panel -->
<div class="abs" style="left:657px;top:460px;width:17px;height:242px;background:linear-gradient(90deg,#1f1f1f,#2b2b2b 30%,#2b2b2b 70%,#242424)"></div>

<!-- LAYER COMPS PANEL x409..673 y227..466 -->
<div class="abs" style="left:408px;top:227px;width:266px;height:239px;background:#353535"></div>
<div class="abs" style="left:408px;top:227px;width:266px;height:4px;background:#1c1c1c"></div>
<div class="abs" style="left:408px;top:231px;width:266px;height:17px;background:#262626"></div>
<div class="abs" style="left:409px;top:231px;width:57px;height:18px;background:#353535"></div>
<div class="abs" style="left:466px;top:231px;width:1px;height:17px;background:#1a1a1a"></div>
<div class="abs" style="left:467px;top:232px;width:34px;height:16px;background:#2d2d2d"></div>
<div class="abs" style="left:501px;top:231px;width:1px;height:17px;background:#1a1a1a"></div>
<div class="abs" style="left:466px;top:248px;width:208px;height:1px;background:#1f1f1f"></div>
<div class="t cj" style="left:416px;top:233px;font-weight:bold;letter-spacing:0.6px">图层复合</div>
<div class="t cj" style="left:473px;top:233px;font-weight:normal;color:#b8b8b8">注释</div>
<svg class="abs" style="left:634px;top:236px" width="10" height="8"><polygon points="0,0 5,4 0,8" fill="#cfcfcf"/><polygon points="5,0 10,4 5,8" fill="#cfcfcf"/></svg>
<div class="abs" style="left:650px;top:232px;width:1px;height:16px;background:#3c3c3c"></div>
<div class="abs" style="left:652px;top:232px;width:1px;height:16px;background:#3c3c3c"></div>
<svg class="abs" style="left:656px;top:236px" width="15" height="9" viewBox="0 0 15 9"><polygon points="0,2 5,2 2.5,5" fill="#cfcfcf"/><rect x="6" y="0" width="9" height="1.4" fill="#cfcfcf"/><rect x="6" y="2.6" width="9" height="1.4" fill="#cfcfcf"/><rect x="6" y="5.2" width="9" height="1.4" fill="#cfcfcf"/><rect x="6" y="7.6" width="9" height="1.4" fill="#cfcfcf"/></svg>

<!-- scroll track -->
<div class="abs" style="left:658px;top:249px;width:16px;height:191px;background:linear-gradient(90deg,#262626,#2e2e2e 30%,#2e2e2e 70%,#282828)"></div>

<div class="crow" style="top:249px;height:23px"></div>
<div class="crow" style="top:273px"></div>
<div class="crow" style="top:296px"></div>
<div class="crow" style="top:319px;background:#4b5968"></div>
<div class="crow" style="top:342px"></div>
<div class="abs" style="left:409px;top:365px;width:249px;height:75px;background:#313131"></div>

<div class="cb" style="left:415px;top:255px"></div>
<div class="cb" style="left:415px;top:278px"></div>
<div class="cb" style="left:415px;top:301px"></div>
<div class="cb" style="left:415px;top:347px"></div>
<svg class="abs" style="left:415px;top:323px" width="12" height="13" viewBox="0 0 12 13"><rect x=".7" y=".7" width="10.6" height="11.6" fill="#3a4654" stroke="#ececec" stroke-width="1.4"/><rect x="2.2" y="2.6" width="3.6" height="1" fill="#ececec"/><rect x="2.2" y="4.6" width="3.6" height="1" fill="#ececec"/><rect x="2" y="7.4" width="8" height="2.8" fill="#ececec"/><rect x="6.8" y="2.2" width="3.2" height="3.8" fill="#2a3440"/></svg>

<div class="t cj" style="left:436px;top:252.5px;font-weight:bold">最后的文档状态</div>
<div class="t" style="left:436px;top:276px">Songs</div>
<div class="t" style="left:436px;top:299px">Albums</div>
<div class="t" style="left:436px;top:322px">Camera</div>
<div class="t" style="left:436px;top:345px">Photo</div>

<!-- row icons -->
<svg class="abs" style="left:601.5px;top:279px" width="13" height="9"><use href="#eye"/></svg>
<svg class="abs" style="left:601.5px;top:302px" width="13" height="9"><use href="#eye"/></svg>
<svg class="abs" style="left:601.5px;top:325px" width="13" height="9"><use href="#eye"/></svg>
<svg class="abs" style="left:601.5px;top:348px" width="13" height="9"><use href="#eye"/></svg>
<svg class="abs" style="left:621px;top:277px" width="13" height="13"><use href="#mv"/></svg>
<svg class="abs" style="left:621px;top:300px" width="13" height="13"><use href="#mv"/></svg>
<svg class="abs" style="left:621px;top:323px" width="13" height="13"><use href="#mv"/></svg>
<svg class="abs" style="left:621px;top:346px" width="13" height="13"><use href="#mv"/></svg>
<div class="abs fx" style="left:641px;top:275px"><b>f</b>x</div>
<div class="abs fx" style="left:641px;top:298px"><b>f</b>x</div>
<div class="abs fx" style="left:641px;top:321px"><b>f</b>x</div>
<div class="abs fx" style="left:641px;top:344px"><b>f</b>x</div>

<!-- toolbar -->
<div class="abs" style="left:409px;top:439px;width:265px;height:1px;background:#2a2a2a"></div>
<div class="abs" style="left:409px;top:440px;width:265px;height:18px;background:#3a3a3a"></div>
<div class="abs" style="left:449px;top:440px;width:27px;height:18px;background:#484848;border-left:1px solid #2e2e2e;border-right:1px solid #2e2e2e;box-sizing:border-box"></div>
<div class="abs" style="left:409px;top:458px;width:265px;height:1px;background:#222"></div>
<div class="abs" style="left:409px;top:459px;width:265px;height:7px;background:#393939"></div>
<div class="abs" style="left:408px;top:466px;width:266px;height:1px;background:#1a1a1a"></div>
<div class="abs grip" style="left:532px;top:461px;width:19px;height:3px"></div>
<svg class="abs" style="left:426px;top:445px" width="10" height="10"><polygon points="10,0 10,10 0,5" fill="#d0d0d0"/></svg>
<svg class="abs" style="left:458px;top:444px" width="9" height="10"><polygon points="0,0 9,5 0,10" fill="#bcbcbc"/></svg>
<!-- eye+diamond -->
<svg class="abs" style="left:484px;top:444px" width="16" height="13" viewBox="0 0 16 13"><path d="M0,4.5 C2.5,0.4 9.5,0.4 12,4.5 C9.5,8.6 2.5,8.6 0,4.5 Z" fill="#9c9c9c"/><circle cx="6" cy="4.3" r="2.6" fill="#2e2e2e"/><circle cx="6.8" cy="3.4" r="0.9" fill="#c8c8c8"/><polygon points="10.5,5.5 15.5,9 10.5,12.5 5.5,9" fill="#dcdcdc" stroke="#3a3a3a" stroke-width=".6"/></svg>
<svg class="abs" style="left:511px;top:443px" width="19" height="15" viewBox="0 0 19 15"><use href="#mv"/><polygon points="13.5,7.5 18.5,11 13.5,14.5 8.5,11" fill="#dcdcdc" stroke="#3a3a3a" stroke-width=".6"/></svg>
<div class="abs fx" style="left:542px;top:440px"><b>f</b>x</div>
<svg class="abs" style="left:548px;top:450px" width="11" height="8" viewBox="0 0 11 8"><polygon points="5.5,0.5 10.5,4 5.5,7.5 0.5,4" fill="#dcdcdc" stroke="#3a3a3a" stroke-width=".6"/></svg>
<svg class="abs" style="left:571px;top:444px" width="13" height="12" viewBox="0 0 13 12"><path d="M2,5.5 A4.6,4.6 0 0,1 10.2,3" fill="none" stroke="#d6d6d6" stroke-width="2"/><polygon points="12.6,0.6 12.6,5.6 7.8,4.4" fill="#d6d6d6"/><path d="M11,6.5 A4.6,4.6 0 0,1 2.8,9" fill="none" stroke="#d6d6d6" stroke-width="2"/><polygon points="0.4,11.4 0.4,6.4 5.2,7.6" fill="#d6d6d6"/></svg>
<svg class="abs" style="left:605px;top:444px" width="11" height="11" viewBox="0 0 11 11"><path d="M0,0 L11,0 L11,11 L5,11 L5,6 L0,6 Z" fill="#d6d6d6"/><polygon points="0.5,7 4,7 4,10.5" fill="#bdbdbd"/></svg>
<svg class="abs" style="left:633px;top:443px" width="11" height="13" viewBox="0 0 11 13"><use href="#trash"/></svg>
<svg class="abs" style="left:662px;top:446px" width="11" height="11" viewBox="0 0 11 11"><g fill="#1e1e1e"><rect x="8" y="0" width="2" height="2"/><rect x="5" y="3" width="2" height="2"/><rect x="8" y="3" width="2" height="2"/><rect x="2" y="6" width="2" height="2"/><rect x="5" y="6" width="2" height="2"/><rect x="8" y="6" width="2" height="2"/><rect x="2" y="9" width="2" height="2"/><rect x="5" y="9" width="2" height="2"/><rect x="8" y="9" width="2" height="2"/></g></svg>
<!-- hand cursor -->
<svg class="abs" style="left:455px;top:449px" width="17" height="18" viewBox="0 0 17 18"><path d="M5,10 L5,2 Q5,0.6 6.3,0.6 Q7.6,0.6 7.6,2 L7.6,6 Q7.8,5 9,5 Q10.2,5 10.3,6.4 Q10.6,5.6 11.7,5.7 Q12.8,5.8 12.9,7.2 Q13.3,6.6 14.2,6.8 Q15.2,7 15.2,8.4 L15.2,12 Q15.2,14.5 13.8,16 L13.8,17.5 L6.4,17.5 L6.4,16 Q4.4,14 2.6,11.6 Q1.4,10 2.4,9.3 Q3.4,8.7 5,10 Z" fill="#fff" stroke="#111" stroke-width="1"/></svg>


</body></html>
